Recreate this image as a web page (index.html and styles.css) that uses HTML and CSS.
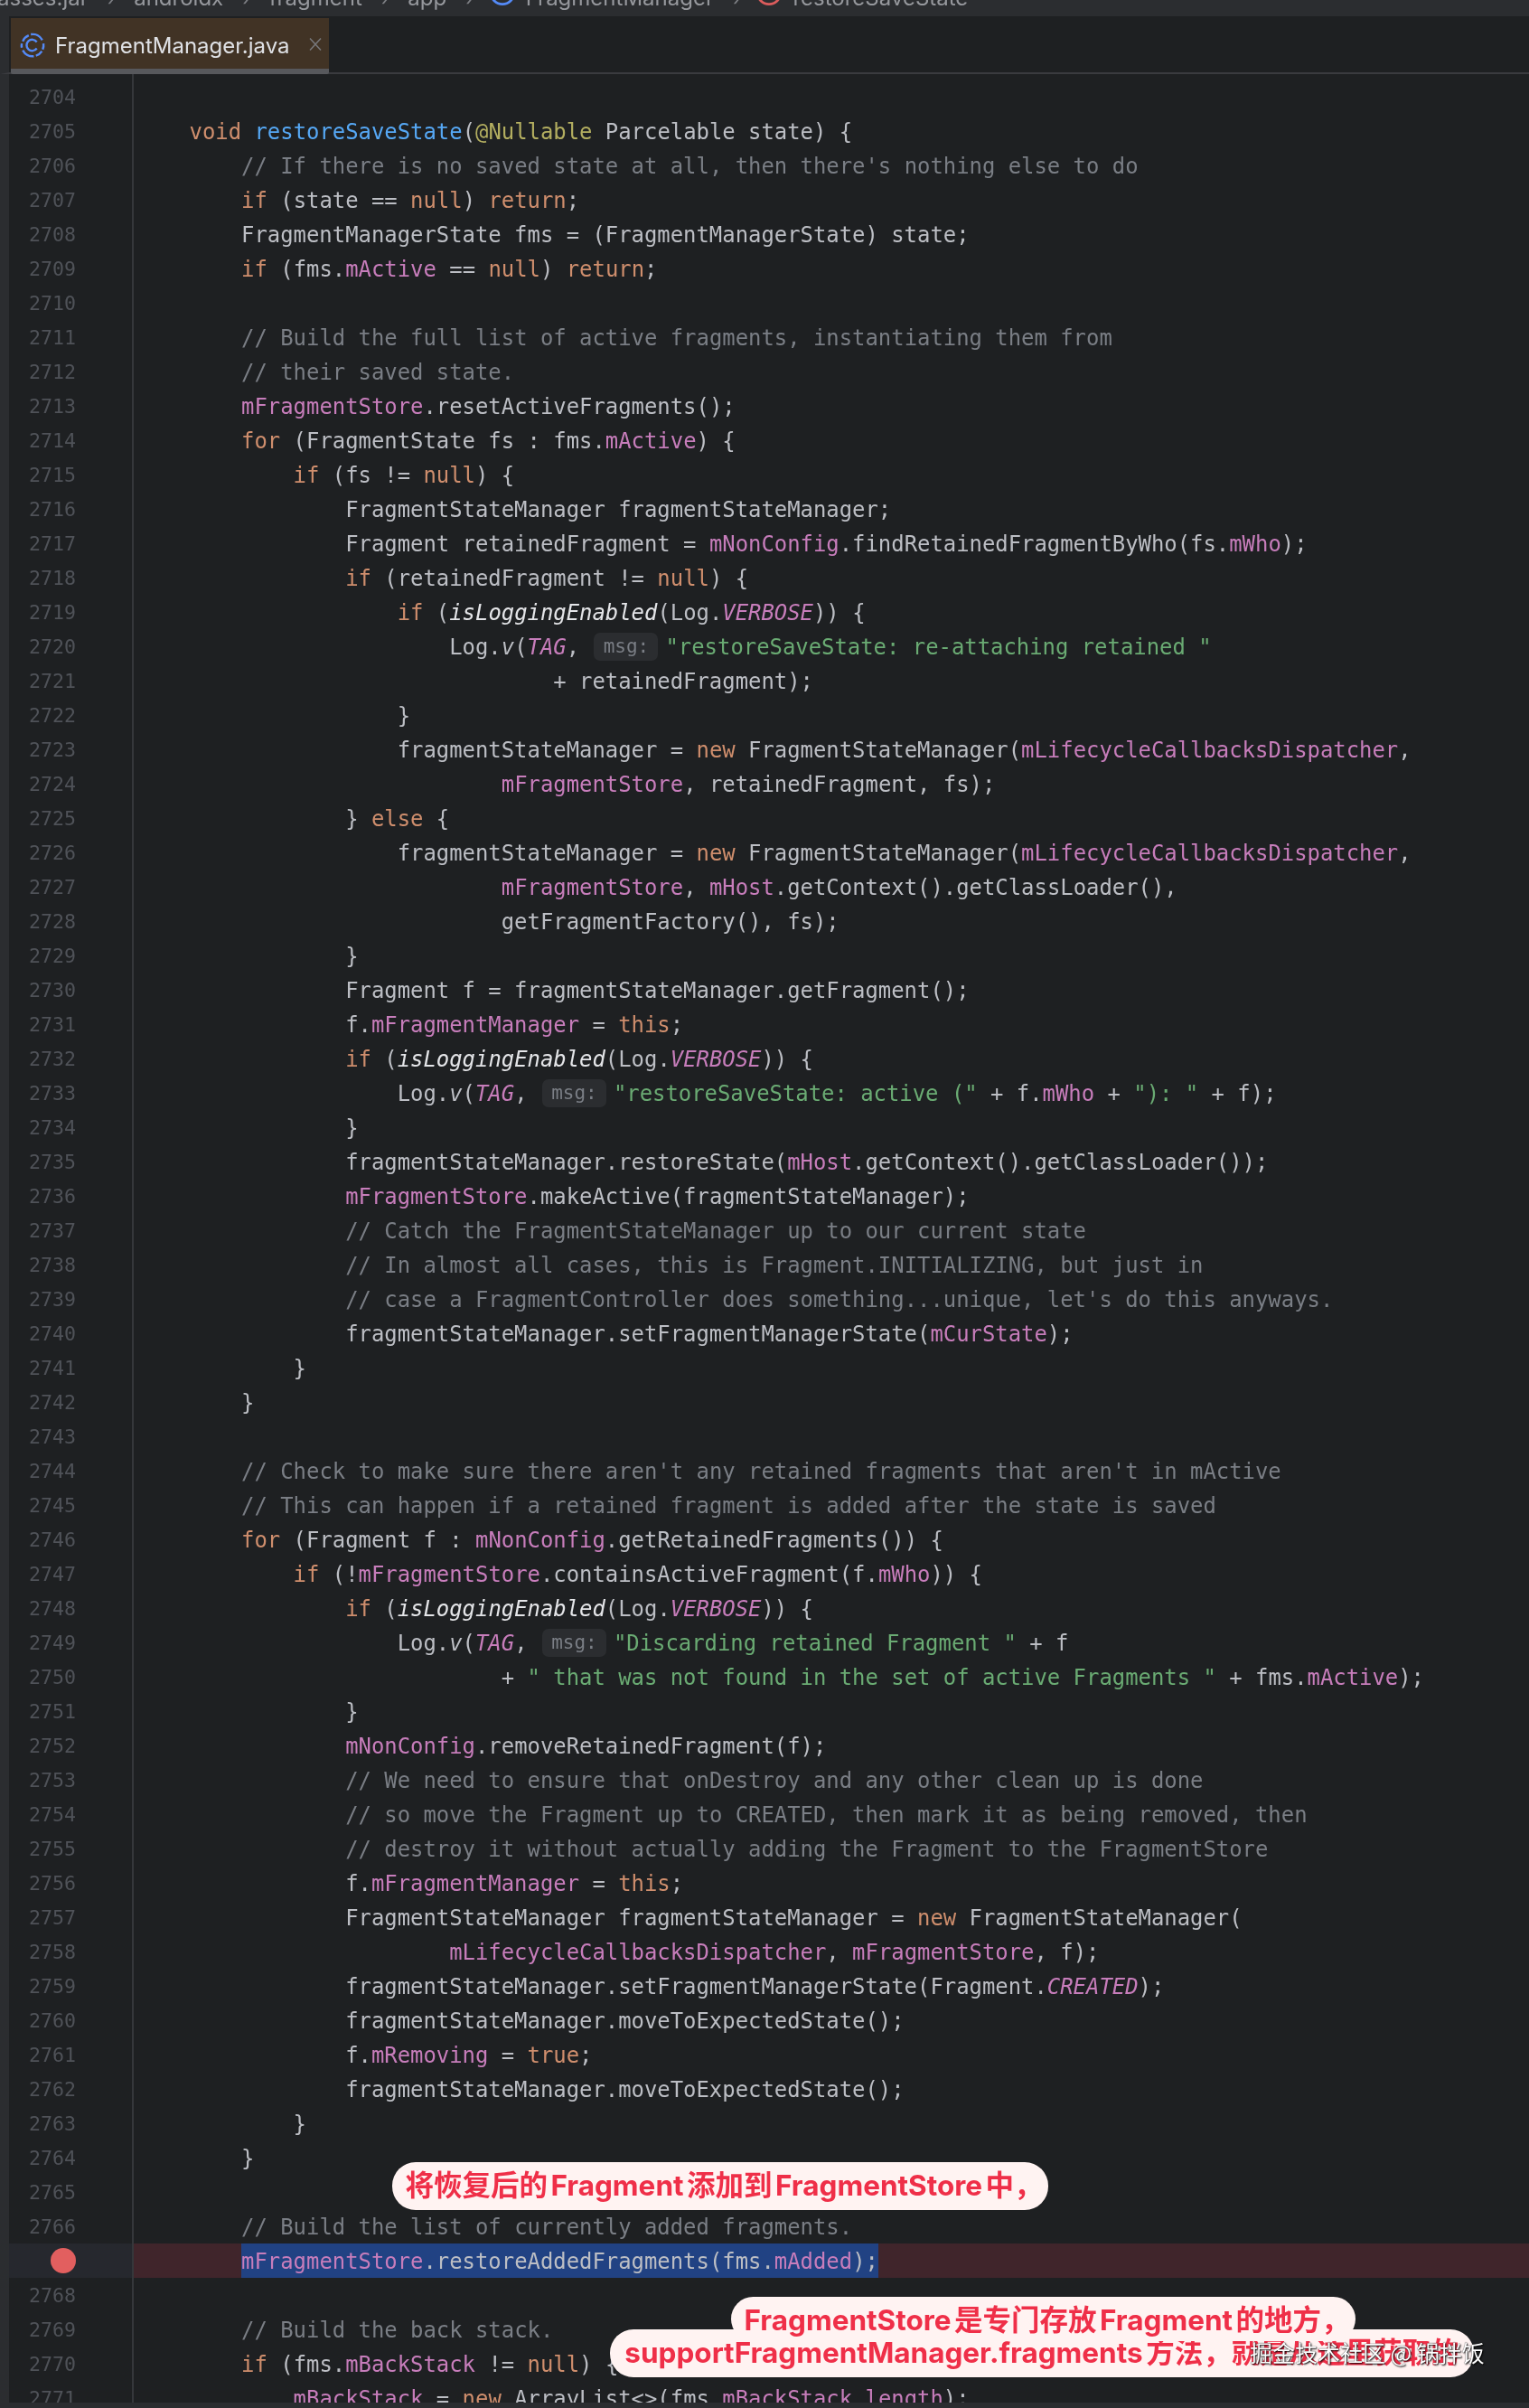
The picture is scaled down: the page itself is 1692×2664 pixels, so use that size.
FILE: index.html
```html
<!DOCTYPE html>
<html lang="zh">
<head>
<meta charset="utf-8">
<title>FragmentManager.java</title>
<link rel="stylesheet" href="styles.css">
</head>
<body>
<div class="window">
<nav class="crumbs">
<span class="crumb first">asses.jar</span><span class="sep">›</span>
<span class="crumb">androidx</span><span class="sep">›</span>
<span class="crumb">fragment</span><span class="sep">›</span>
<span class="crumb">app</span><span class="sep">›</span>
<svg class="ico" viewBox="0 0 32 32"><circle cx="16" cy="16" r="13.5" fill="none" stroke="#548af7" stroke-width="3"/></svg>
<span class="crumb">FragmentManager</span><span class="sep">›</span>
<svg class="ico" viewBox="0 0 32 32"><circle cx="16" cy="16" r="13.5" fill="none" stroke="#db5c5c" stroke-width="3"/></svg>
<span class="crumb">restoreSaveState</span>
</nav>
<div class="tabbar">
<div class="tab">
<svg class="tab-ico" viewBox="0 0 32 32"><g fill="none" stroke="#548af7" stroke-width="2.6"><path d="M4.5 11.5A13 13 0 0 1 11.5 4.500" /><path d="M14 3.200A13 13 0 0 1 27.500 10"/><path d="M28.900 14A13 13 0 0 1 28 21"/><path d="M27 23A13 13 0 0 1 20 28.400"/><path d="M17.500 29A13 13 0 0 1 4.500 22"/><path d="M3.300 19A13 13 0 0 1 3.300 14"/><path d="M21 12.200A6.600 6.600 0 1 0 21 19.800"/></g></svg>
<span class="tab-name">FragmentManager.java</span>
<svg class="tab-x" viewBox="0 0 16 16"><path d="M2 1.500L14 14.500M14 1.500L2 14.500" fill="none" stroke="#77787c" stroke-width="1.500"/></svg>
</div>
</div>
<main class="editor">
<div class="row spacer"><span class="num"></span><code class="code"></code></div>
<div class="row"><span class="num">2704</span><code class="code"></code></div>
<div class="row"><span class="num">2705</span><code class="code">    <b class="k">void</b> <b class="m">restoreSaveState</b>(<b class="a">@Nullable</b> Parcelable state) {</code></div>
<div class="row"><span class="num">2706</span><code class="code">        <b class="c">// If there is no saved state at all, then there's nothing else to do</b></code></div>
<div class="row"><span class="num">2707</span><code class="code">        <b class="k">if</b> (state == <b class="k">null</b>) <b class="k">return</b>;</code></div>
<div class="row"><span class="num">2708</span><code class="code">        FragmentManagerState fms = (FragmentManagerState) state;</code></div>
<div class="row"><span class="num">2709</span><code class="code">        <b class="k">if</b> (fms.<b class="f">mActive</b> == <b class="k">null</b>) <b class="k">return</b>;</code></div>
<div class="row"><span class="num">2710</span><code class="code"></code></div>
<div class="row"><span class="num">2711</span><code class="code">        <b class="c">// Build the full list of active fragments, instantiating them from</b></code></div>
<div class="row"><span class="num">2712</span><code class="code">        <b class="c">// their saved state.</b></code></div>
<div class="row"><span class="num">2713</span><code class="code">        <b class="f">mFragmentStore</b>.resetActiveFragments();</code></div>
<div class="row"><span class="num">2714</span><code class="code">        <b class="k">for</b> (FragmentState fs : fms.<b class="f">mActive</b>) {</code></div>
<div class="row"><span class="num">2715</span><code class="code">            <b class="k">if</b> (fs != <b class="k">null</b>) {</code></div>
<div class="row"><span class="num">2716</span><code class="code">                FragmentStateManager fragmentStateManager;</code></div>
<div class="row"><span class="num">2717</span><code class="code">                Fragment retainedFragment = <b class="f">mNonConfig</b>.findRetainedFragmentByWho(fs.<b class="f">mWho</b>);</code></div>
<div class="row"><span class="num">2718</span><code class="code">                <b class="k">if</b> (retainedFragment != <b class="k">null</b>) {</code></div>
<div class="row"><span class="num">2719</span><code class="code">                    <b class="k">if</b> (<b class="si">isLoggingEnabled</b>(Log.<b class="sf">VERBOSE</b>)) {</code></div>
<div class="row"><span class="num">2720</span><code class="code">                        Log.<b class="it">v</b>(<b class="sf">TAG</b>, <b class="hint">msg:</b><b class="s">"restoreSaveState: re-attaching retained "</b></code></div>
<div class="row"><span class="num">2721</span><code class="code">                                + retainedFragment);</code></div>
<div class="row"><span class="num">2722</span><code class="code">                    }</code></div>
<div class="row"><span class="num">2723</span><code class="code">                    fragmentStateManager = <b class="k">new</b> FragmentStateManager(<b class="f">mLifecycleCallbacksDispatcher</b>,</code></div>
<div class="row"><span class="num">2724</span><code class="code">                            <b class="f">mFragmentStore</b>, retainedFragment, fs);</code></div>
<div class="row"><span class="num">2725</span><code class="code">                } <b class="k">else</b> {</code></div>
<div class="row"><span class="num">2726</span><code class="code">                    fragmentStateManager = <b class="k">new</b> FragmentStateManager(<b class="f">mLifecycleCallbacksDispatcher</b>,</code></div>
<div class="row"><span class="num">2727</span><code class="code">                            <b class="f">mFragmentStore</b>, <b class="f">mHost</b>.getContext().getClassLoader(),</code></div>
<div class="row"><span class="num">2728</span><code class="code">                            getFragmentFactory(), fs);</code></div>
<div class="row"><span class="num">2729</span><code class="code">                }</code></div>
<div class="row"><span class="num">2730</span><code class="code">                Fragment f = fragmentStateManager.getFragment();</code></div>
<div class="row"><span class="num">2731</span><code class="code">                f.<b class="f">mFragmentManager</b> = <b class="k">this</b>;</code></div>
<div class="row"><span class="num">2732</span><code class="code">                <b class="k">if</b> (<b class="si">isLoggingEnabled</b>(Log.<b class="sf">VERBOSE</b>)) {</code></div>
<div class="row"><span class="num">2733</span><code class="code">                    Log.<b class="it">v</b>(<b class="sf">TAG</b>, <b class="hint">msg:</b><b class="s">"restoreSaveState: active ("</b> + f.<b class="f">mWho</b> + <b class="s">"): "</b> + f);</code></div>
<div class="row"><span class="num">2734</span><code class="code">                }</code></div>
<div class="row"><span class="num">2735</span><code class="code">                fragmentStateManager.restoreState(<b class="f">mHost</b>.getContext().getClassLoader());</code></div>
<div class="row"><span class="num">2736</span><code class="code">                <b class="f">mFragmentStore</b>.makeActive(fragmentStateManager);</code></div>
<div class="row"><span class="num">2737</span><code class="code">                <b class="c">// Catch the FragmentStateManager up to our current state</b></code></div>
<div class="row"><span class="num">2738</span><code class="code">                <b class="c">// In almost all cases, this is Fragment.INITIALIZING, but just in</b></code></div>
<div class="row"><span class="num">2739</span><code class="code">                <b class="c">// case a FragmentController does something...unique, let's do this anyways.</b></code></div>
<div class="row"><span class="num">2740</span><code class="code">                fragmentStateManager.setFragmentManagerState(<b class="f">mCurState</b>);</code></div>
<div class="row"><span class="num">2741</span><code class="code">            }</code></div>
<div class="row"><span class="num">2742</span><code class="code">        }</code></div>
<div class="row"><span class="num">2743</span><code class="code"></code></div>
<div class="row"><span class="num">2744</span><code class="code">        <b class="c">// Check to make sure there aren't any retained fragments that aren't in mActive</b></code></div>
<div class="row"><span class="num">2745</span><code class="code">        <b class="c">// This can happen if a retained fragment is added after the state is saved</b></code></div>
<div class="row"><span class="num">2746</span><code class="code">        <b class="k">for</b> (Fragment f : <b class="f">mNonConfig</b>.getRetainedFragments()) {</code></div>
<div class="row"><span class="num">2747</span><code class="code">            <b class="k">if</b> (!<b class="f">mFragmentStore</b>.containsActiveFragment(f.<b class="f">mWho</b>)) {</code></div>
<div class="row"><span class="num">2748</span><code class="code">                <b class="k">if</b> (<b class="si">isLoggingEnabled</b>(Log.<b class="sf">VERBOSE</b>)) {</code></div>
<div class="row"><span class="num">2749</span><code class="code">                    Log.<b class="it">v</b>(<b class="sf">TAG</b>, <b class="hint">msg:</b><b class="s">"Discarding retained Fragment "</b> + f</code></div>
<div class="row"><span class="num">2750</span><code class="code">                            + <b class="s">" that was not found in the set of active Fragments "</b> + fms.<b class="f">mActive</b>);</code></div>
<div class="row"><span class="num">2751</span><code class="code">                }</code></div>
<div class="row"><span class="num">2752</span><code class="code">                <b class="f">mNonConfig</b>.removeRetainedFragment(f);</code></div>
<div class="row"><span class="num">2753</span><code class="code">                <b class="c">// We need to ensure that onDestroy and any other clean up is done</b></code></div>
<div class="row"><span class="num">2754</span><code class="code">                <b class="c">// so move the Fragment up to CREATED, then mark it as being removed, then</b></code></div>
<div class="row"><span class="num">2755</span><code class="code">                <b class="c">// destroy it without actually adding the Fragment to the FragmentStore</b></code></div>
<div class="row"><span class="num">2756</span><code class="code">                f.<b class="f">mFragmentManager</b> = <b class="k">this</b>;</code></div>
<div class="row"><span class="num">2757</span><code class="code">                FragmentStateManager fragmentStateManager = <b class="k">new</b> FragmentStateManager(</code></div>
<div class="row"><span class="num">2758</span><code class="code">                        <b class="f">mLifecycleCallbacksDispatcher</b>, <b class="f">mFragmentStore</b>, f);</code></div>
<div class="row"><span class="num">2759</span><code class="code">                fragmentStateManager.setFragmentManagerState(Fragment.<b class="sf">CREATED</b>);</code></div>
<div class="row"><span class="num">2760</span><code class="code">                fragmentStateManager.moveToExpectedState();</code></div>
<div class="row"><span class="num">2761</span><code class="code">                f.<b class="f">mRemoving</b> = <b class="k">true</b>;</code></div>
<div class="row"><span class="num">2762</span><code class="code">                fragmentStateManager.moveToExpectedState();</code></div>
<div class="row"><span class="num">2763</span><code class="code">            }</code></div>
<div class="row"><span class="num">2764</span><code class="code">        }</code></div>
<div class="row"><span class="num">2765</span><code class="code"></code></div>
<div class="row"><span class="num">2766</span><code class="code">        <b class="c">// Build the list of currently added fragments.</b></code></div>
<div class="row bp"><span class="num"><i class="dot"></i></span><code class="code">        <b class="sel"><b class="f">mFragmentStore</b>.restoreAddedFragments(fms.<b class="f">mAdded</b>);</b></code></div>
<div class="row"><span class="num">2768</span><code class="code"></code></div>
<div class="row"><span class="num">2769</span><code class="code">        <b class="c">// Build the back stack.</b></code></div>
<div class="row"><span class="num">2770</span><code class="code">        <b class="k">if</b> (fms.<b class="f">mBackStack</b> != <b class="k">null</b>) {</code></div>
<div class="row"><span class="num">2771</span><code class="code">            <b class="f">mBackStack</b> = <b class="k">new</b> ArrayList&lt;&gt;(fms.<b class="f">mBackStack</b>.<b class="f">length</b>);</code></div>
</main>
<div class="statusbar"></div>
<div class="bubble b1">将恢复后的 Fragment 添加到 FragmentStore 中，</div>
<div class="bubble b3">supportFragmentManager.fragments 方法，就是从这里获取的</div>
<div class="bubble b2">FragmentStore 是专门存放 Fragment 的地方，</div>
<div class="watermark">掘金技术社区 @ 锅拌饭</div>
</div>
</body>
</html>
```
FILE: styles.css
```css
* { box-sizing: border-box; }
html, body { margin: 0; padding: 0; background: #1e2022; }
.window {
  position: relative;
  width: 1692px;
  height: 2664px;
  display: flex;
  flex-direction: column;
  overflow: hidden;
  background: #1e2022;
  color: #bcbec4;
  filter: blur(0.35px);
}
.crumbs {
  flex: none;
  height: 18px;
  display: flex;
  align-items: flex-end;
  gap: 21px;
  background: #2b2d30;
  overflow: hidden;
  font: 400 24px/28px Inter, "Liberation Sans", sans-serif;
  color: #96989d;
  white-space: nowrap;
}
.crumbs > * { flex: none; margin-bottom: 6px; }
.crumb.first { margin-left: -3px; }
.sep { color: #7d7f84; font-size: 22px; }
.crumbs > .ico { width: 30px; height: 30px; margin-bottom: 11px; margin-left: -4px; margin-right: -10px; }
.tabbar {
  flex: none;
  height: 64px;
  display: flex;
  background: #1e2022;
  border-left: 10px solid #2b2d30;
  padding-left: 2px;
  border-bottom: 2px solid #3a3b3f;
  padding-top: 2px;
}
.tab {
  width: 352px;
  height: 62px;
  display: flex;
  align-items: center;
  gap: 10px;
  padding: 5px 0 0 9px;
  background: #413325;
  border-bottom: 6px solid #57585c;
  border-radius: 0 0 2px 2px;
}
.tab-ico { width: 30px; height: 30px; flex: none; margin-top: -2px; }
.tab-name {
  font: 400 24px/30px Inter, "Liberation Sans", sans-serif;
  color: #dfe1e5;
  white-space: nowrap;
}
.tab-x { width: 16px; height: 16px; flex: none; margin-left: 10px; margin-top: -4px; }
.editor {
  flex: 1;
  min-height: 0;
  overflow: hidden;
  border-left: 10px solid #2b2d30;
  font-family: "DejaVu Sans Mono", "Liberation Mono", monospace;
}
.row { display: flex; height: 38px; }
.row.spacer { height: 6px; }
.num {
  flex: none;
  width: 138px;
  padding-right: 62px;
  border-right: 2px solid #35373b;
  text-align: right;
  font-size: 21.6px;
  line-height: 40px;
  color: #4f5258;
}
.code {
  flex: 1;
  height: 38px;
  padding-left: 4px;
  font-family: inherit;
  font-size: 23.9px;
  line-height: 40px;
  white-space: pre;
}
.spacer .code { height: 6px; }
.code b { font-weight: 400; }
.code .k { color: #cf8e6d; }
.code .m { color: #56a8f5; }
.code .a { color: #b3ae60; }
.code .f { color: #c77dbb; }
.code .s { color: #6aab73; }
.code .c { color: #7a7e85; }
.code .it { font-style: italic; }
.code .si { font-style: italic; color: #e4e5e8; }
.code .sf { font-style: italic; color: #c77dbb; }
.code .hint {
  display: inline-block;
  width: 71px;
  height: 31px;
  margin: 0 8px 0 2px;
  border-radius: 7px;
  background: #2b2d30;
  color: #7a7e85;
  font-size: 21px;
  line-height: 31px;
  text-align: center;
  vertical-align: 2px;
}
.bp .num { background: #26282e; position: relative; }
.bp .code { background: #40252b; }
.code .sel { display: inline-block; height: 38px; background: #214283; }
.dot {
  position: absolute;
  left: 46px;
  top: 5px;
  width: 28px;
  height: 28px;
  border-radius: 50%;
  background: #e25f5f;
}
.statusbar {
  flex: none;
  height: 6px;
  background: #2b2d30;
}
.bubble {
  position: absolute;
  height: 53px;
  border-radius: 26px;
  background: #fff3f2;
  color: #ef2f48;
  font: 700 31.500px/52px Inter, "Noto Sans CJK SC", sans-serif;
  text-align: center;
  white-space: nowrap;
  word-spacing: -4px;
}
.b1 { left: 434px; top: 2392px; width: 726px; padding-left: 8px; }
.b2 { left: 809px; top: 2541px; width: 691px; height: 49px; padding-left: 8px; }
.b3 { left: 675px; top: 2577px; width: 956px; }
.watermark {
  position: absolute;
  left: 1383px;
  top: 2584px;
  color: #fff;
  font: 400 25px/36px "Noto Sans CJK SC", sans-serif;
  white-space: nowrap;
  text-shadow: 1px 1px 2px #000, 0 0 1px #000;
}
```
